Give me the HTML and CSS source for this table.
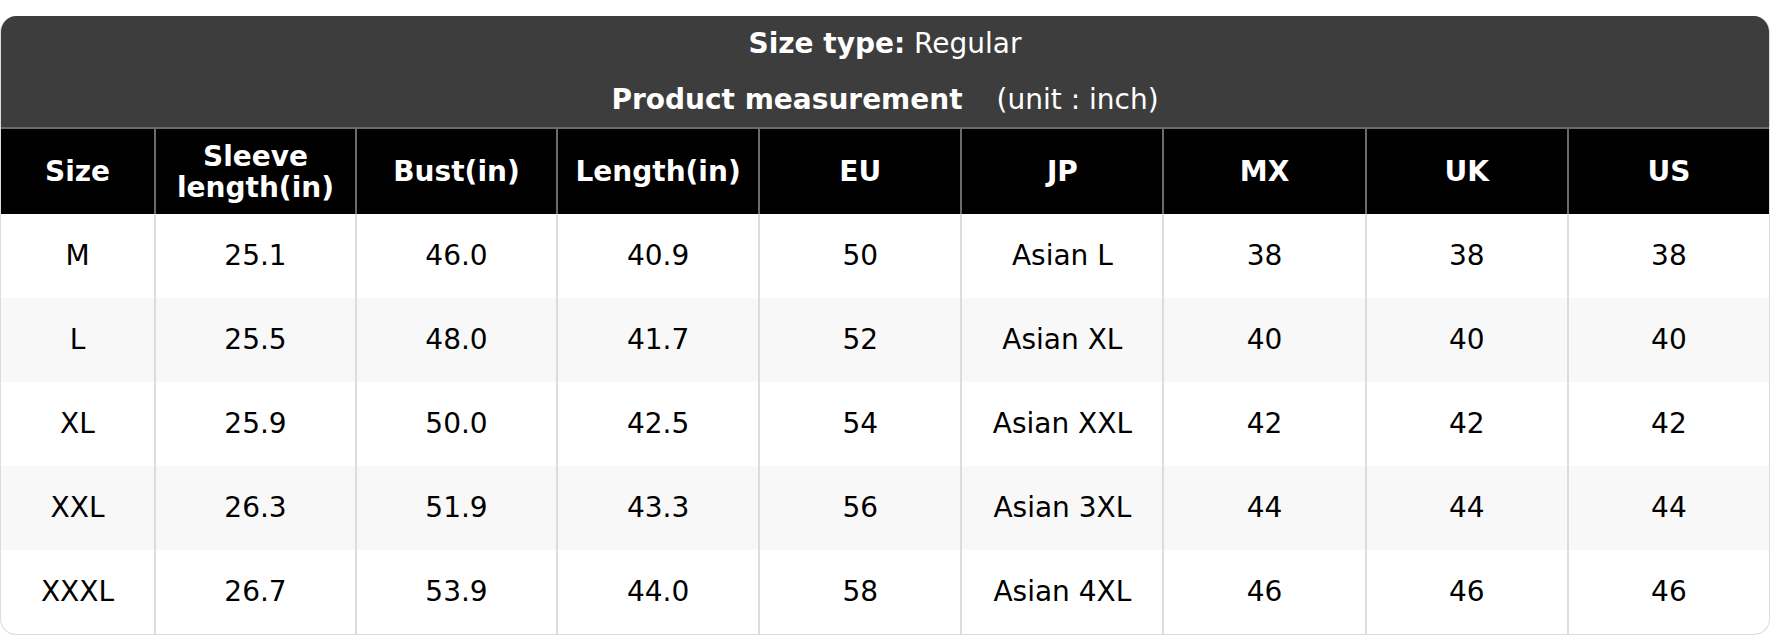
FILE: index.html
```html
<!DOCTYPE html>
<html lang="en">
<head>
<meta charset="utf-8">
<title>Size chart</title>
<link rel="stylesheet" href="styles.css">
</head>
<body>
<div class="card">
  <div class="title">
    <div class="title-line"><b>Size type:</b> Regular</div>
    <div class="title-line second"><b>Product measurement</b><span class="unit">(unit : inch)</span></div>
  </div>
  <table class="chart">
    <colgroup>
      <col class="col-first">
      <col class="col-narrow"><col class="col-narrow">
      <col><col><col><col><col><col>
    </colgroup>
    <thead>
      <tr>
        <th>Size</th>
        <th>Sleeve<br>length(in)</th>
        <th>Bust(in)</th>
        <th>Length(in)</th>
        <th>EU</th>
        <th>JP</th>
        <th>MX</th>
        <th>UK</th>
        <th>US</th>
      </tr>
    </thead>
    <tbody>
      <tr><td>M</td><td>25.1</td><td>46.0</td><td>40.9</td><td>50</td><td>Asian L</td><td>38</td><td>38</td><td>38</td></tr>
      <tr><td>L</td><td>25.5</td><td>48.0</td><td>41.7</td><td>52</td><td>Asian XL</td><td>40</td><td>40</td><td>40</td></tr>
      <tr><td>XL</td><td>25.9</td><td>50.0</td><td>42.5</td><td>54</td><td>Asian XXL</td><td>42</td><td>42</td><td>42</td></tr>
      <tr><td>XXL</td><td>26.3</td><td>51.9</td><td>43.3</td><td>56</td><td>Asian 3XL</td><td>44</td><td>44</td><td>44</td></tr>
      <tr><td>XXXL</td><td>26.7</td><td>53.9</td><td>44.0</td><td>58</td><td>Asian 4XL</td><td>46</td><td>46</td><td>46</td></tr>
    </tbody>
  </table>
</div>
</body>
</html>
```

FILE: styles.css
```css
html, body {
  margin: 0;
  padding: 0;
  background: #ffffff;
}

body {
  font-family: "DejaVu Sans", Verdana, sans-serif;
  padding-top: 16px;
}

.card {
  border: 1px solid #dcdcdc;
  border-top: none;
  border-radius: 16px;
  overflow: hidden;
  background: #ffffff;
}

.title {
  background: #3d3d3d;
  color: #ffffff;
  text-align: center;
  font-size: 28px;
}

.title-line {
  height: 56px;
  line-height: 56px;
}

.title-line.second {
  height: 55px;
  line-height: 55px;
}

.unit {
  margin-left: 34px;
}

.chart {
  width: 100%;
  table-layout: fixed;
  border-collapse: separate;
  border-spacing: 0;
  font-size: 28px;
}

.col-first {
  width: 153px;
}

.col-narrow {
  width: 201px;
}

.chart th {
  background: #000000;
  color: #ffffff;
  font-weight: bold;
  line-height: 31px;
  height: 85px;
  padding: 0;
  border-top: 2px solid #6b6b6b;
  text-align: center;
  vertical-align: middle;
}

.chart th + th {
  border-left: 2px solid #6b6b6b;
}

.chart td {
  height: 84px;
  padding: 0;
  text-align: center;
  vertical-align: middle;
  color: #000000;
  line-height: 30px;
}

.chart td + td {
  border-left: 2px solid #dddddd;
}

.chart tbody tr:nth-child(even) td {
  background: #f8f8f8;
}
```
